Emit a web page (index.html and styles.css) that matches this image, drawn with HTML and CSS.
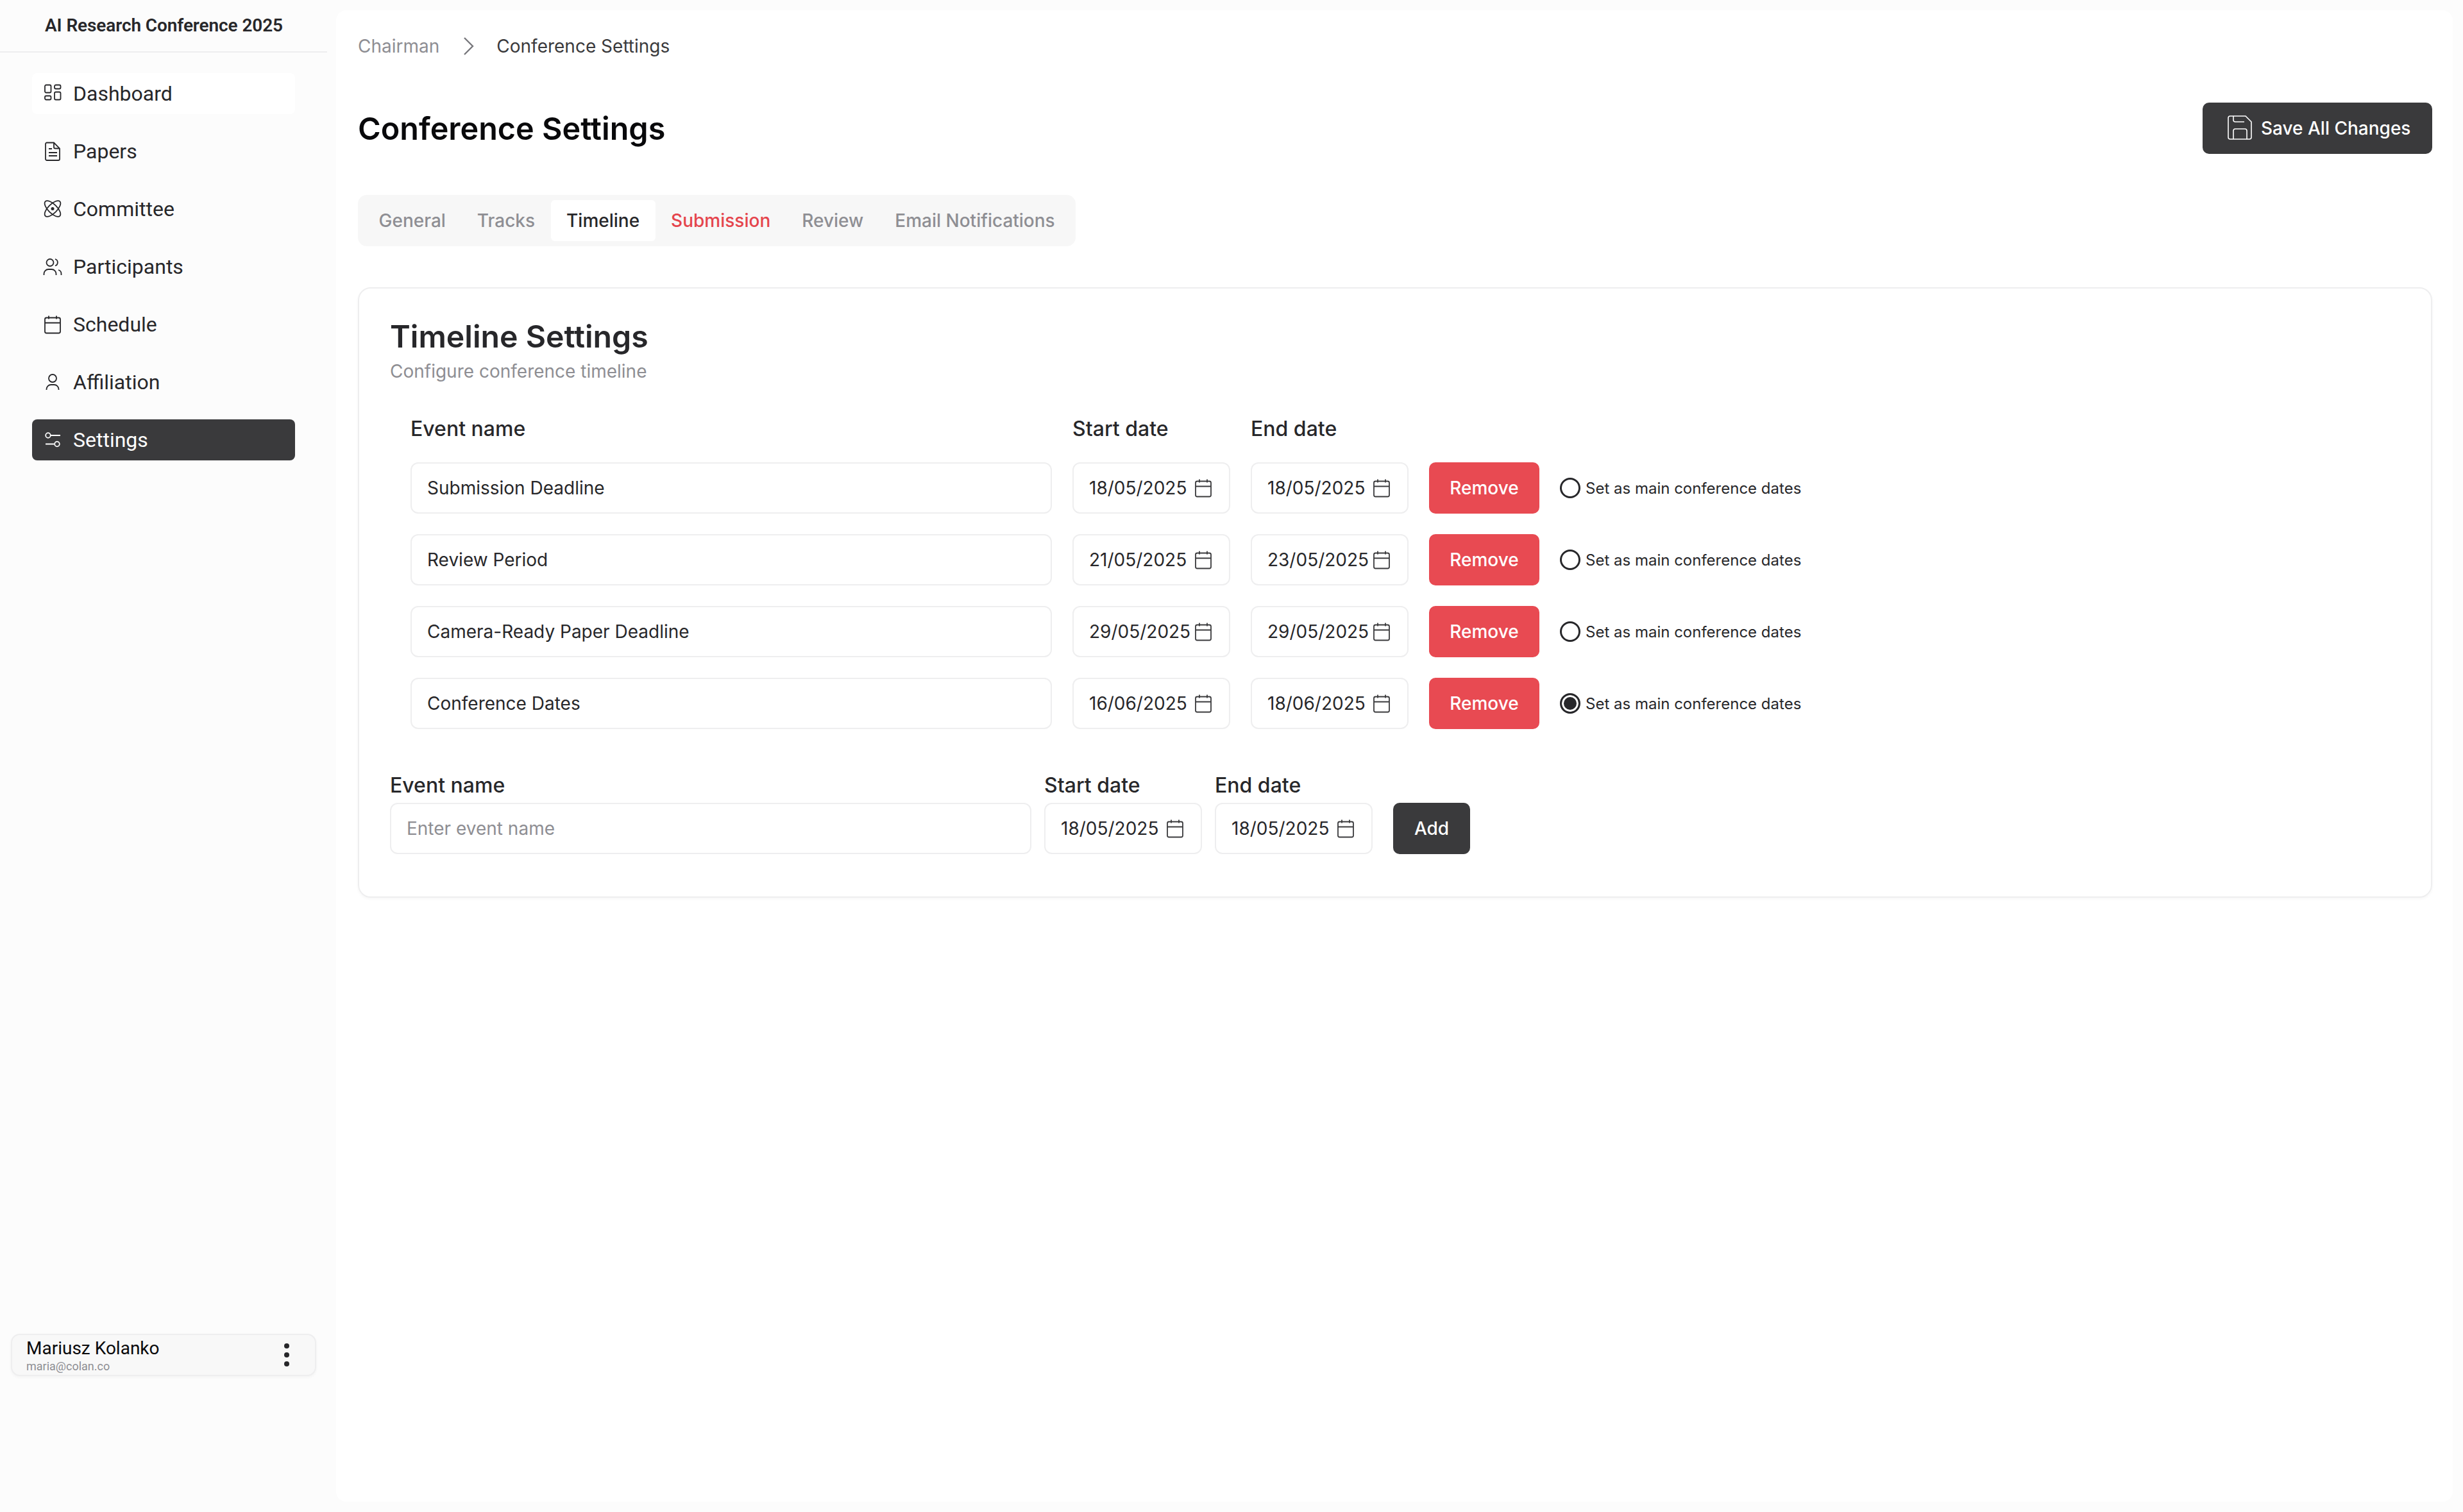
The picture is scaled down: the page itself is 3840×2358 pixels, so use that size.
FILE: index.html
```html
<!DOCTYPE html>
<html>
<head>
<meta charset="UTF-8">
<title>Conference Settings</title>
<link rel="stylesheet" href="styles.css">
</head>
<body>
<svg class="defs" width="0" height="0">
  <symbol id="i-cal" viewBox="0 0 32 32">
    <rect x="4" y="5.500" width="24" height="24" rx="2.500" fill="none" stroke="currentColor" stroke-width="1.800"/>
    <path d="M4 13.500h24M10 2.500v5M22 2.500v5" fill="none" stroke="currentColor" stroke-width="1.800"/>
  </symbol>
</svg>
<div class="app">
  <aside class="sidebar">
    <div class="brand">AI Research Conference 2025</div>
    <nav class="nav">
      <a class="nav-item hover">
        <svg class="nav-icon" viewBox="0 0 32 32" fill="none" stroke="currentColor" stroke-width="1.800"><rect x="4" y="2.500" width="9.500" height="12" rx="2"/><rect x="19" y="2.500" width="9.500" height="6" rx="2"/><rect x="4" y="19.500" width="9.500" height="6" rx="2"/><rect x="19" y="13.500" width="9.500" height="12" rx="2"/></svg>
        Dashboard
      </a>
      <a class="nav-item">
        <svg class="nav-icon" viewBox="0 0 32 32" fill="none" stroke="currentColor" stroke-width="1.800"><path d="M7 2.500h11l9 9V28a2 2 0 0 1-2 2H7a2 2 0 0 1-2-2V4.500a2 2 0 0 1 2-2z"/><path d="M18 2.500v7a2 2 0 0 0 2 2h7M10 12h5M10 18h13M10 23h13"/></svg>
        Papers
      </a>
      <a class="nav-item">
        <svg class="nav-icon" viewBox="0 0 32 32" fill="none" stroke="currentColor" stroke-width="1.800"><ellipse cx="16" cy="15.500" rx="16" ry="7" transform="rotate(45 16 15.500)"/><ellipse cx="16" cy="15.500" rx="16" ry="7" transform="rotate(-45 16 15.500)"/><circle cx="16" cy="15.500" r="2.500" fill="currentColor" stroke="none"/></svg>
        Committee
      </a>
      <a class="nav-item">
        <svg class="nav-icon" viewBox="0 0 32 32" fill="none" stroke="currentColor" stroke-width="1.800"><circle cx="12" cy="9.500" r="5.500"/><path d="M20 4a5.500 5.500 0 0 1 0 10.500M2.500 29v-2a7 7 0 0 1 7-7h5a7 7 0 0 1 7 7v2M25 21a6 6 0 0 1 4.500 6v2"/></svg>
        Participants
      </a>
      <a class="nav-item">
        <svg class="nav-icon" viewBox="0 0 32 32"><use href="#i-cal"/></svg>
        Schedule
      </a>
      <a class="nav-item">
        <svg class="nav-icon" viewBox="0 0 32 32" fill="none" stroke="currentColor" stroke-width="1.800"><circle cx="16" cy="10" r="6"/><path d="M6.500 28v-1a7 7 0 0 1 7-7h5a7 7 0 0 1 7 7v1"/></svg>
        Affiliation
      </a>
      <a class="nav-item active">
        <svg class="nav-icon" viewBox="0 0 32 32" fill="none" stroke="currentColor" stroke-width="1.800"><circle cx="9" cy="9" r="3.800"/><path d="M13 9h15M5 22.500h13.500"/><circle cx="23" cy="22.500" r="3.800"/></svg>
        Settings
      </a>
    </nav>
    <div class="user-card">
      <div class="user-text">
        <div class="user-name">Mariusz Kolanko</div>
        <div class="user-mail">maria@colan.co</div>
      </div>
      <div class="user-menu"><i></i><i></i><i></i></div>
    </div>
  </aside>

  <main class="main">
    <div class="crumbs">
      <span class="crumb-root">Chairman</span>
      <svg class="crumb-sep" viewBox="0 0 20 32" fill="none" stroke="currentColor" stroke-width="2.400"><path d="M3 3l13 13L3 29"/></svg>
      <span>Conference Settings</span>
    </div>

    <div class="head">
      <h1>Conference Settings</h1>
      <button class="btn btn-dark btn-save">
        <svg class="save-icon" viewBox="0 0 38 38" fill="none" stroke="currentColor" stroke-width="1.600"><path d="M4 1h24l9 9v24a3 3 0 0 1-3 3H4a3 3 0 0 1-3-3V4a3 3 0 0 1 3-3z"/><path d="M9 1v6a3 3 0 0 0 3 3h14M9 37V24a3 3 0 0 1 3-3h15a3 3 0 0 1 3 3v13"/></svg>
        Save All Changes
      </button>
    </div>

    <div class="tabs">
      <span class="tab">General</span>
      <span class="tab">Tracks</span>
      <span class="tab tab-on">Timeline</span>
      <span class="tab tab-err">Submission</span>
      <span class="tab">Review</span>
      <span class="tab">Email Notifications</span>
    </div>

    <section class="card">
      <h2>Timeline Settings</h2>
      <p class="sub">Configure conference timeline</p>

      <div class="events">
        <div class="ev-row ev-head">
          <label>Event name</label><label>Start date</label><label>End date</label>
        </div>
        <div class="ev-row">
          <input class="field" value="Submission Deadline">
          <div class="field date">18/05/2025<svg class="cal"><use href="#i-cal"/></svg></div>
          <div class="field date">18/05/2025<svg class="cal"><use href="#i-cal"/></svg></div>
          <button class="btn btn-red">Remove</button>
          <div class="main-date"><span class="radio"></span>Set as main conference dates</div>
        </div>
        <div class="ev-row">
          <input class="field" value="Review Period">
          <div class="field date">21/05/2025<svg class="cal"><use href="#i-cal"/></svg></div>
          <div class="field date">23/05/2025<svg class="cal"><use href="#i-cal"/></svg></div>
          <button class="btn btn-red">Remove</button>
          <div class="main-date"><span class="radio"></span>Set as main conference dates</div>
        </div>
        <div class="ev-row">
          <input class="field" value="Camera-Ready Paper Deadline">
          <div class="field date">29/05/2025<svg class="cal"><use href="#i-cal"/></svg></div>
          <div class="field date">29/05/2025<svg class="cal"><use href="#i-cal"/></svg></div>
          <button class="btn btn-red">Remove</button>
          <div class="main-date"><span class="radio"></span>Set as main conference dates</div>
        </div>
        <div class="ev-row">
          <input class="field" value="Conference Dates">
          <div class="field date">16/06/2025<svg class="cal"><use href="#i-cal"/></svg></div>
          <div class="field date">18/06/2025<svg class="cal"><use href="#i-cal"/></svg></div>
          <button class="btn btn-red">Remove</button>
          <div class="main-date"><span class="radio radio-on"></span>Set as main conference dates</div>
        </div>
      </div>

      <div class="add-form">
        <label>Event name</label><label>Start date</label><label>End date</label><span></span>
        <input class="field" placeholder="Enter event name">
        <div class="field date">18/05/2025<svg class="cal"><use href="#i-cal"/></svg></div>
        <div class="field date">18/05/2025<svg class="cal"><use href="#i-cal"/></svg></div>
        <button class="btn btn-dark btn-add">Add</button>
      </div>
    </section>
  </main>
</div>
</body>
</html>
```

FILE: styles.css
```css
* {
  box-sizing: border-box;
}
html, body {
  margin: 0;
  height: 100%;
}
body {
  background: #fcfcfc;
  color: #27272a;
  font-family: "Inter", "Liberation Sans", sans-serif;
  font-size: 28px;
}
.defs {
  display: block;
  height: 0;
}
.app {
  display: flex;
  height: 2358px;
  padding: 16px 16px 16px 0;
}

/* sidebar */
.sidebar {
  width: 524px;
  flex: none;
  margin-top: -16px;
  margin-bottom: -16px;
  display: flex;
  flex-direction: column;
  font-family: "Roboto", "Liberation Sans", sans-serif;
}
.brand {
  width: 510px;
  height: 82px;
  border-bottom: 2px solid #eeeeef;
  padding: 20px 0 0 70px;
  font-size: 28px;
  line-height: 40px;
  font-weight: 600;
  letter-spacing: -0.1px;
}
.nav {
  width: 510px;
  padding: 32px 50px 0;
  display: flex;
  flex-direction: column;
  gap: 26px;
}
.nav-item {
  height: 64px;
  display: flex;
  align-items: center;
  gap: 16px;
  padding-left: 16px;
  border-radius: 8px;
  font-size: 32px;
}
.nav-item.hover {
  background: #fff;
}
.nav-item.active {
  background: #3a3a3c;
  color: #fff;
}
.nav-icon {
  width: 32px;
  height: 32px;
  flex: none;
}
.user-card {
  width: 476px;
  height: 66px;
  margin: auto 0 212px 17px;
  padding: 3px 0 0 22px;
  display: flex;
  align-items: center;
  justify-content: space-between;
  background: #f8f8f8;
  border: 2px solid #eeeeef;
  border-radius: 14px;
  box-shadow: 0 2px 4px rgba(0, 0, 0, 0.04);
}
.user-name {
  font-size: 28px;
  line-height: 32px;
  color: #09090b;
}
.user-mail {
  font-size: 18px;
  line-height: 24px;
  color: #8e8e93;
}
.user-menu {
  width: 8px;
  margin: -3px 40px 0 0;
  display: flex;
  flex-direction: column;
  gap: 6px;
}
.user-menu i {
  display: block;
  width: 8px;
  height: 8px;
  border-radius: 50%;
  background: #27272a;
}

/* main */
.main {
  flex: 1;
  min-width: 0;
  background: #fff;
  border-radius: 16px;
  padding: 36px 32px 0 34px;
}
.crumbs {
  display: flex;
  align-items: center;
  height: 40px;
  font-size: 28px;
  color: #3a3a3c;
}
.crumb-root {
  color: #8e8e93;
}
.crumb-sep {
  width: 20px;
  height: 32px;
  margin: 0 33px 0 36px;
  color: #77777c;
}
.head {
  display: flex;
  align-items: center;
  justify-content: space-between;
  margin-top: 68px;
}
h1 {
  margin: 0;
  font-size: 48.5px;
  font-weight: 600;
  color: #09090b;
}
.btn {
  border: 0;
  border-radius: 10px;
  font-family: inherit;
  font-size: 28px;
  font-weight: 500;
  color: #fff;
  height: 80px;
}
.btn-dark {
  background: #3a3a3c;
}
.btn-red {
  background: #e84a52;
}
.btn-save {
  width: 358px;
  display: flex;
  align-items: center;
  gap: 14px;
  padding: 0 0 0 39px;
}
.save-icon {
  width: 38px;
  height: 38px;
  flex: none;
  margin-top: -2px;
}
.tabs {
  display: inline-flex;
  margin-top: 64px;
  height: 80px;
  padding: 8px;
  background: #f7f7f7;
  border-radius: 14px;
}
.tab {
  padding: 0 24.500px;
  line-height: 64px;
  color: #8e8e93;
  font-weight: 500;
  border-radius: 6px;
}
.tab-on {
  background: #fff;
  color: #27272a;
}
.tab-err {
  color: #e5454d;
}
.card {
  margin-top: 64px;
  height: 952px;
  padding: 45px 48px 0;
  border: 2px solid #eeeeef;
  border-radius: 20px;
  box-shadow: 0 2px 4px rgba(0, 0, 0, 0.04);
}
h2 {
  margin: 0;
  font-size: 48.2px;
  line-height: 60px;
  font-weight: 600;
}
.sub {
  margin: 4px 0 0;
  line-height: 40px;
  color: #8e8e93;
}
.events {
  margin-top: 50px;
  padding-left: 32px;
  display: flex;
  flex-direction: column;
  gap: 32px;
}
.ev-row {
  display: grid;
  grid-template-columns: 1000px 246px 246px 172px auto;
  column-gap: 32px;
  align-items: center;
}
.ev-head {
  height: 40px;
}
label {
  font-size: 32px;
  font-weight: 500;
  line-height: 40px;
}
.field {
  height: 80px;
  width: 100%;
  border: 2px solid #eeeeef;
  border-radius: 12px;
  background: #fff;
  padding: 0 24px;
  font-family: inherit;
  font-size: 28px;
  color: #27272a;
  outline: 0;
}
.field::placeholder {
  color: #8e8e93;
  opacity: 1;
}
.date {
  display: flex;
  align-items: center;
  white-space: nowrap;
}
.cal {
  width: 32px;
  height: 32px;
  margin-left: auto;
  flex: none;
  color: #3a3a3c;
}
.main-date {
  display: flex;
  align-items: center;
  gap: 8px;
  font-size: 24px;
}
.radio {
  width: 32px;
  height: 32px;
  flex: none;
  border: 3px solid #27272a;
  border-radius: 50%;
  background: #fff;
}
.radio-on {
  background: #27272a;
  box-shadow: inset 0 0 0 3px #fff;
}
.add-form {
  margin-top: 68px;
  display: grid;
  grid-template-columns: 1000px 246px 246px 132px;
  column-gap: 20px;
  row-gap: 7px;
}
.btn-add {
  margin-left: 12px;
}
```
